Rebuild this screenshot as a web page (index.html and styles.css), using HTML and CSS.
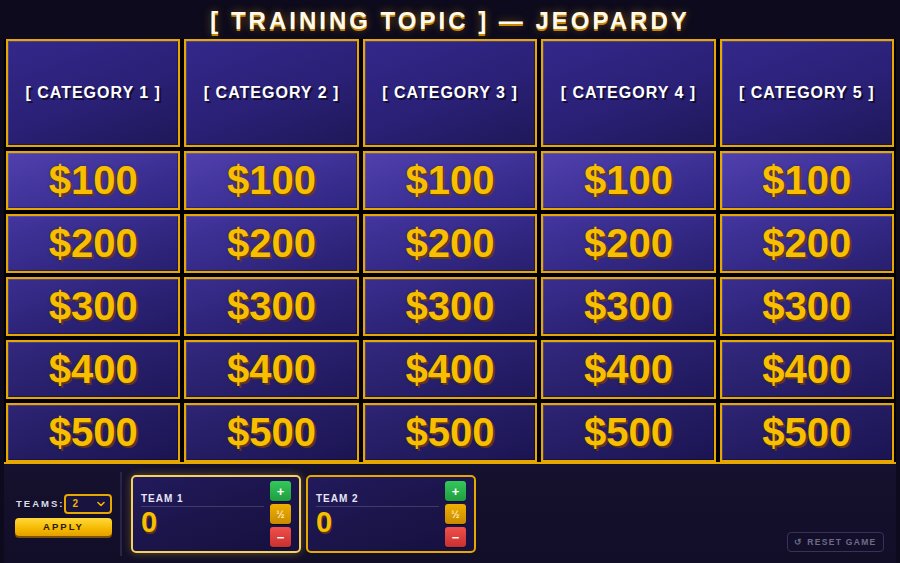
FILE: index.html
```html
<!DOCTYPE html>
<html lang="en">
<head>
<meta charset="utf-8">
<title>Jeopardy</title>
<link rel="stylesheet" href="styles.css">
</head>
<body>
<div class="page">
  <h1 class="title">[ TRAINING TOPIC ] — JEOPARDY</h1>
  <div class="board">
    <div class="cell cat">[ CATEGORY 1 ]</div>
    <div class="cell cat">[ CATEGORY 2 ]</div>
    <div class="cell cat">[ CATEGORY 3 ]</div>
    <div class="cell cat">[ CATEGORY 4 ]</div>
    <div class="cell cat">[ CATEGORY 5 ]</div>

    <div class="cell val r1">$100</div><div class="cell val r1">$100</div><div class="cell val r1">$100</div><div class="cell val r1">$100</div><div class="cell val r1">$100</div>
    <div class="cell val r2">$200</div><div class="cell val r2">$200</div><div class="cell val r2">$200</div><div class="cell val r2">$200</div><div class="cell val r2">$200</div>
    <div class="cell val r3">$300</div><div class="cell val r3">$300</div><div class="cell val r3">$300</div><div class="cell val r3">$300</div><div class="cell val r3">$300</div>
    <div class="cell val r4">$400</div><div class="cell val r4">$400</div><div class="cell val r4">$400</div><div class="cell val r4">$400</div><div class="cell val r4">$400</div>
    <div class="cell val r5">$500</div><div class="cell val r5">$500</div><div class="cell val r5">$500</div><div class="cell val r5">$500</div><div class="cell val r5">$500</div>
  </div>
  <div class="footer">
    <div class="setup">
      <div class="teams-row">
        <span class="teams-label">TEAMS:</span>
        <div class="select"><span>2</span>
          <svg class="chev" width="8" height="6" viewBox="0 0 8 6"><path d="M1 1.5 L4 4.5 L7 1.5" fill="none" stroke="#f0b400" stroke-width="1.6" stroke-linecap="round" stroke-linejoin="round"/></svg>
        </div>
      </div>
      <div class="apply">APPLY</div>
    </div>
    <div class="divider"></div>
    <div class="teams">
      <div class="team active">
        <div class="team-info">
          <div class="team-name">TEAM 1</div>
          <div class="team-score">0</div>
        </div>
        <div class="btns">
          <div class="btn plus">+</div>
          <div class="btn half">½</div>
          <div class="btn minus">−</div>
        </div>
      </div>
      <div class="team">
        <div class="team-info">
          <div class="team-name">TEAM 2</div>
          <div class="team-score">0</div>
        </div>
        <div class="btns">
          <div class="btn plus">+</div>
          <div class="btn half">½</div>
          <div class="btn minus">−</div>
        </div>
      </div>
    </div>
    <div class="spacer"></div>
    <div class="reset">↺ RESET GAME</div>
  </div>
</div>
</body>
</html>
```
FILE: styles.css
```css
html, body {
  margin: 0;
  padding: 0;
  background: #0c0a1c;
  font-family: "Liberation Sans", Arial, sans-serif;
}
.page {
  width: 900px;
  height: 563px;
  overflow: hidden;
  display: flex;
  flex-direction: column;
}
.title {
  margin: 0;
  height: 39px;
  line-height: 41px;
  text-align: center;
  color: #fffaf0;
  font-size: 24px;
  font-weight: bold;
  letter-spacing: 3px;
  text-shadow: 0 2px 0 #c98600, 0 0 8px rgba(255, 170, 0, 0.45);
}
.board {
  margin: 0 4px;
  padding: 0 2px;
  background: #000;
  display: grid;
  grid-template-columns: repeat(5, 1fr);
  grid-template-rows: 108px repeat(5, 59px);
  gap: 4px;
}
.cell {
  box-sizing: border-box;
  border: 2px solid #e6a700;
  display: flex;
  align-items: center;
  justify-content: center;
  box-shadow: inset 1px 1px 0 rgba(255, 255, 255, 0.12), inset -1px -1px 0 rgba(0, 0, 0, 0.25);
}
.cat {
  background: linear-gradient(160deg, #33288a 0%, #2a2076 55%, #1f1858 100%);
  color: #fff;
  font-size: 16px;
  font-weight: bold;
  letter-spacing: 1px;
  text-shadow: 2px 2px 0 #120d36;
}
.val {
  color: #f7bf00;
  font-size: 40px;
  font-weight: bold;
  text-shadow: 2px 2px 0 rgba(110, 60, 10, 0.85), 0 0 3px rgba(60, 30, 0, 0.4);
}
.r1 { background: linear-gradient(160deg, #5040ae 0%, #3f3298 50%, #2e2580 100%); }
.r2 { background: linear-gradient(160deg, #43359e 0%, #352a88 50%, #271f6e 100%); }
.r3 { background: linear-gradient(160deg, #3a2e8e 0%, #2d2378 50%, #221a62 100%); }
.r4 { background: linear-gradient(160deg, #33287e 0%, #28206c 50%, #1e175a 100%); }
.r5 { background: linear-gradient(160deg, #2e2474 0%, #241c62 50%, #1b1452 100%); }

.footer {
  flex: 1;
  margin: 0 4px;
  border-top: 2px solid #e6a700;
  background: linear-gradient(180deg, #15112e 0%, #120e28 100%);
  display: flex;
  align-items: center;
  padding: 0 12px 0 11px;
}
.setup {
  display: flex;
  flex-direction: column;
  gap: 4px;
  width: 97px;
  margin-top: 2px;
}
.teams-row {
  display: flex;
  align-items: center;
  justify-content: space-between;
}
.teams-label {
  color: #dcdcec;
  font-size: 9.5px;
  font-weight: bold;
  letter-spacing: 2px;
  padding-left: 1px;
}
.select {
  box-sizing: border-box;
  width: 49px;
  height: 20px;
  border: 2px solid #e6a700;
  border-radius: 4px;
  background: #191340;
  display: flex;
  align-items: center;
  justify-content: space-between;
  padding: 0 5px 0 6px;
  color: #f0b400;
  font-size: 10px;
  font-weight: bold;
}
.apply {
  height: 18px;
  border-radius: 4px;
  background: linear-gradient(180deg, #ffd93a 0%, #f5b800 60%, #e2a000 100%);
  box-shadow: 0 2px 0 #7a5200;
  color: #2a1a00;
  font-size: 9.5px;
  font-weight: bold;
  letter-spacing: 2px;
  display: flex;
  align-items: center;
  justify-content: center;
}
.divider {
  width: 2px;
  height: 84px;
  background: #2a2545;
  margin: 0 9px 0 8px;
  align-self: center;
}
.teams {
  display: flex;
  gap: 5px;
  align-self: flex-start;
  margin-top: 11px;
}
.team {
  box-sizing: border-box;
  width: 170px;
  height: 78px;
  border: 2px solid #e6a700;
  border-radius: 5px;
  background: linear-gradient(160deg, #221a5c 0%, #1a1448 60%, #161040 100%);
  display: flex;
  padding: 3px 8px 4px 8px;
  gap: 6px;
}
.team.active {
  border-color: #f3d060;
  box-shadow: 0 0 8px rgba(255, 200, 40, 0.35);
}
.team-info {
  flex: 1;
  padding-top: 13px;
}
.team-name {
  color: #e8e6f4;
  font-size: 10px;
  font-weight: bold;
  letter-spacing: 1px;
  padding-bottom: 2px;
  border-bottom: 1px solid rgba(255, 255, 255, 0.16);
}
.team-score {
  color: #f7bf00;
  font-size: 29px;
  font-weight: bold;
  line-height: 30px;
  text-shadow: 1px 2px 0 rgba(110, 60, 10, 0.85);
}
.btns {
  display: flex;
  flex-direction: column;
  gap: 3px;
  padding-top: 1px;
}
.btn {
  width: 21px;
  height: 20px;
  border-radius: 3px;
  color: #fff;
  font-weight: bold;
  font-size: 13px;
  display: flex;
  align-items: center;
  justify-content: center;
  box-shadow: 0 1px 0 rgba(0, 0, 0, 0.5);
}
.plus { background: linear-gradient(180deg, #34c85a 0%, #1f9e40 100%); }
.half { background: linear-gradient(180deg, #f0b000 0%, #c98a00 100%); color: #ffecc0; font-size: 10px; }
.minus { background: linear-gradient(180deg, #f0504a 0%, #c83030 100%); }
.spacer { flex: 1; }
.reset {
  align-self: flex-end;
  margin-bottom: 11px;
  box-sizing: border-box;
  width: 97px;
  height: 20px;
  border: 1px solid #37325a;
  border-radius: 4px;
  color: #6f6b8a;
  font-size: 8.5px;
  font-weight: bold;
  letter-spacing: 1.3px;
  display: flex;
  align-items: center;
  justify-content: center;
}
```
